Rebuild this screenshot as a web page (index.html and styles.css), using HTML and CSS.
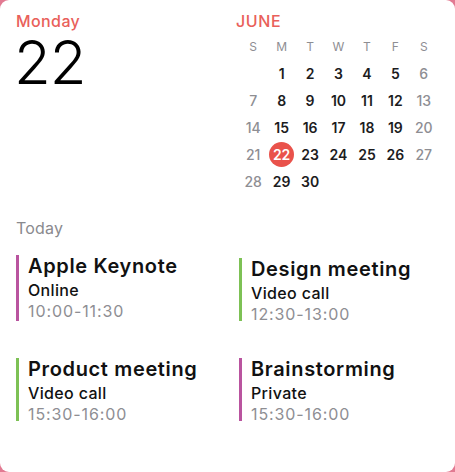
FILE: index.html
```html
<!DOCTYPE html>
<html lang="en">
<head>
<meta charset="utf-8">
<title>Calendar widget</title>
<link rel="stylesheet" href="styles.css">
</head>
<body>
<div class="widget">
  <div class="top">
    <div class="day">
      <div class="weekday">Monday</div>
      <div class="daynum">22</div>
    </div>
    <div class="month">
      <div class="month-name">JUNE</div>
      <div class="grid head">
        <span>S</span><span>M</span><span>T</span><span>W</span><span>T</span><span>F</span><span>S</span>
      </div>
      <div class="grid dates">
        <span></span><span>1</span><span>2</span><span>3</span><span>4</span><span>5</span><span class="we">6</span>
        <span class="we">7</span><span>8</span><span>9</span><span>10</span><span>11</span><span>12</span><span class="we">13</span>
        <span class="we">14</span><span>15</span><span>16</span><span>17</span><span>18</span><span>19</span><span class="we">20</span>
        <span class="we">21</span><span class="today"><b>22</b></span><span>23</span><span>24</span><span>25</span><span>26</span><span class="we">27</span>
        <span class="we">28</span><span>29</span><span>30</span>
      </div>
    </div>
  </div>
  <div class="section-label">Today</div>
  <div class="events">
    <div class="event purple first">
      <div class="title">Apple Keynote</div>
      <div class="sub">Online</div>
      <div class="time">10:00-11:30</div>
    </div>
    <div class="event green">
      <div class="title">Design meeting</div>
      <div class="sub">Video call</div>
      <div class="time">12:30-13:00</div>
    </div>
    <div class="event green">
      <div class="title">Product meeting</div>
      <div class="sub">Video call</div>
      <div class="time">15:30-16:00</div>
    </div>
    <div class="event purple">
      <div class="title">Brainstorming</div>
      <div class="sub">Private</div>
      <div class="time">15:30-16:00</div>
    </div>
  </div>
</div>
</body>
</html>
```
FILE: styles.css
```css
html, body {
  margin: 0;
  padding: 0;
  height: 100%;
}
body {
  background: #e27a92;
  font-family: Inter, "Noto Sans", "Liberation Sans", sans-serif;
  color: #111;
}
.widget {
  box-sizing: border-box;
  width: 455px;
  height: 472px;
  background: #fff;
  border-radius: 9px;
  padding: 11px 17px 0 16px;
}
.top {
  display: grid;
  grid-template-columns: 223px 199px;
}
.weekday {
  color: #e9605a;
  font-size: 16px;
  font-weight: 500;
  line-height: 20px;
  letter-spacing: 0.4px;
}
.daynum {
  font-size: 60px;
  font-weight: 300;
  line-height: 58px;
  margin-top: 2px;
  letter-spacing: -1px;
  margin-left: -2px;
  color: #000;
}
.month-name {
  color: #e9605a;
  font-size: 16px;
  font-weight: 500;
  line-height: 20px;
  margin-left: -3px;
  letter-spacing: 0.6px;
}
.grid {
  display: grid;
  grid-template-columns: repeat(7, 1fr);
  text-align: center;
}
.head {
  margin-top: 3px;
  font-size: 12px;
  line-height: 26px;
  color: #8e8e93;
}
.dates {
  font-size: 14px;
  font-weight: 600;
  color: #1c1c1e;
  grid-auto-rows: 27px;
  align-items: center;
}
.dates .we {
  color: #8e8e93;
  font-weight: 500;
}
.dates .today b {
  display: inline-flex;
  align-items: center;
  justify-content: center;
  width: 25px;
  height: 25px;
  border-radius: 50%;
  background: #e9524b;
  color: #fff;
  font-weight: 600;
  vertical-align: middle;
}
.section-label {
  margin-top: 23px;
  font-size: 16px;
  line-height: 20px;
  color: #8a8a8e;
  letter-spacing: 0.2px;
}
.events {
  margin-top: 20px;
  display: grid;
  grid-template-columns: 223px 199px;
  row-gap: 37px;
}
.event {
  border-left: 3px solid #b9549f;
  padding-left: 9px;
  white-space: nowrap;
}
.event.green {
  border-left-color: #7dc155;
}
.event.first {
  margin-top: -3px;
}
.title {
  font-size: 20px;
  font-weight: 600;
  line-height: 22px;
  letter-spacing: 0.65px;
  color: #111;
}
.sub {
  margin-top: 3px;
  font-size: 16px;
  font-weight: 500;
  line-height: 21px;
  letter-spacing: 0.35px;
  color: #111;
}
.time {
  font-size: 16px;
  line-height: 21px;
  letter-spacing: 0.9px;
  color: #8e8e93;
  margin-bottom: -4px;
}
```
